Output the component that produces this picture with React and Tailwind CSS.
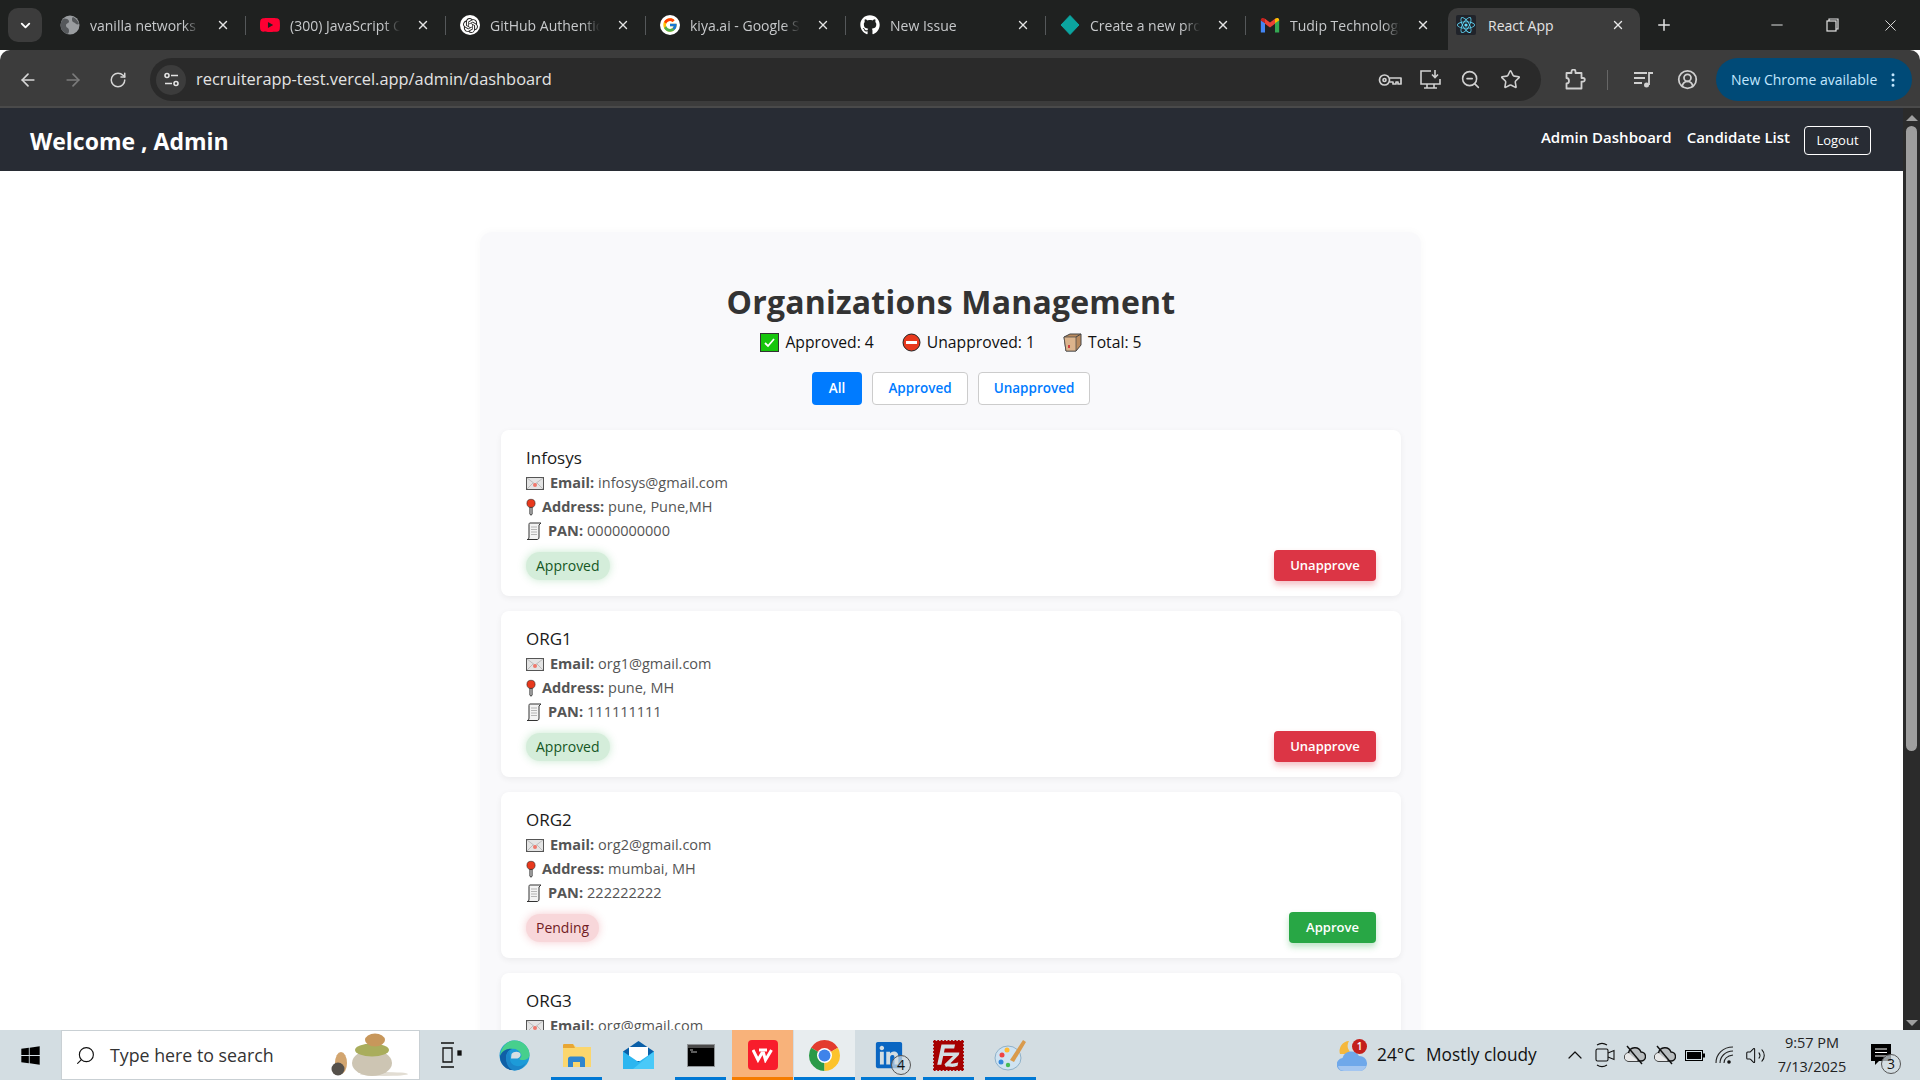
import React from "react";
import { ArrowLeft, ArrowRight, RotateCw, ZoomOut, Star, CircleUserRound, EllipsisVertical, Plus, Minus, X, ChevronDown, ChevronUp, Search, Volume2 } from "lucide-react";
import { FaGithub, FaLinkedin, FaWindows, FaReact } from "react-icons/fa";
import { FcGoogle } from "react-icons/fc";
import { SiOpenai, SiFilezilla, SiYoutube } from "react-icons/si";

const Gmail = () => (
  <svg width="20" height="20" viewBox="0 0 24 24">
    <path d="M1 21V6l5 3.500V21z" fill="#4285f4" />
    <path d="M23 21V6l-5 3.500V21z" fill="#34a853" />
    <path d="M6 4.500v6l6 4.500 6-4.500v-6l-6 4.500z" fill="#ea4335" />
    <path d="M1 6c0-2.500 3-3 5-1.500v5.500L1 6.500z" fill="#c5221f" />
    <path d="M23 6c0-2.500-3-3-5-1.500v5.500l5-3.500z" fill="#fbbc04" />
  </svg>
);
const Diamond = () => (
  <svg width="20" height="20" viewBox="0 0 20 20"><path d="M10 0.500l9 9.500-9 9.500-9-9.500z" fill="#0ca5a0" stroke="#0ca5a0" strokeLinejoin="round" /></svg>
);
const GlobeFav = () => (
  <svg width="20" height="20" viewBox="0 0 20 20">
    <circle cx="10" cy="10" r="9.500" fill="#9a9da0" />
    <path d="M4 3.500c3 0 5 1 5 3s-3 1.500-3 4 3 2 3 5-1 3-2 3.500C3 17.500.5 14 .5 10c0-2.500 1.500-5 3.500-6.500zM13 2c3 1.500 5 4 6 7-2 1-3 0-4-1s-3-1-3-3 0-2 1-3z" fill="#55585b" />
  </svg>
);

const tabs = [
  { t: "vanilla networks developer", i: <GlobeFav /> },
  { t: "(300) JavaScript Concepts", i: <SiYoutube size={20} className="text-[#ff0033]" /> },
  { t: "GitHub Authentication", i: <span className="w-5 h-5 rounded-full bg-white flex items-center justify-center"><SiOpenai size={15} className="text-[#222]" /></span> },
  { t: "kiya.ai - Google Search", i: <span className="w-5 h-5 rounded-full bg-white flex items-center justify-center"><FcGoogle size={16} /></span> },
  { t: "New Issue", i: <FaGithub size={20} className="text-white" /> },
  { t: "Create a new project", i: <Diamond /> },
  { t: "Tudip Technologies Mail", i: <Gmail /> },
];

function Tab({ t, i, last }) {
  return (
    <div className="relative w-[200px] h-[42px] flex items-center pl-[14px] pr-[16px] shrink-0">
      <span className="w-5 flex justify-center shrink-0">{i}</span>
      <span className="ml-[10px] w-[110px] overflow-hidden whitespace-nowrap text-[14px] text-[#c7c9cb] [mask-image:linear-gradient(to_right,black_85%,transparent)]">{t}</span>
      <X size={14} strokeWidth={2.4} className="ml-auto text-[#e3e3e3] shrink-0" />
      {!last && <span className="absolute right-0 top-[12px] h-[19px] w-px bg-[#55585a]" />}
    </div>
  );
}

const CheckEmoji = () => (
  <svg width="19" height="19" viewBox="0 0 19 19" className="shrink-0">
    <rect x="0.500" y="0.500" width="18" height="18" fill="#16c60c" stroke="#333" />
    <path d="M5 10l3 3 6-7" fill="none" stroke="#fff" strokeWidth="1.800" />
  </svg>
);
const NoEntry = () => (
  <svg width="19" height="19" viewBox="0 0 19 19" className="shrink-0 block">
    <circle cx="9.500" cy="9.500" r="8.500" fill="#e8391d" stroke="#222" />
    <rect x="4" y="8" width="11" height="3" fill="#fff" />
  </svg>
);
const Pack = () => (
  <svg width="19" height="19" viewBox="0 0 19 19" className="shrink-0 block">
    <path d="M1 4l6-3h11v11l-5 6H3z" fill="#b98a5e" stroke="#444" />
    <path d="M1 4l12 0 0 14H3z" fill="#dcb48c" stroke="#444" strokeWidth="0.700" />
    <path d="M13 4l5-3" stroke="#444" />
    <rect x="5" y="12" width="2" height="3" fill="#d04040" />
  </svg>
);
const Mail = () => (
  <svg width="18" height="13" viewBox="0 0 18 13" className="shrink-0">
    <rect x="0.500" y="0.500" width="17" height="12" fill="#e4e4e4" stroke="#555" />
    <path d="M1 1l8 6 8-6M1 12l6-6M17 12l-6-6" fill="none" stroke="#aaa" strokeWidth="0.700" />
    <circle cx="9" cy="8" r="2" fill="#f0786c" />
  </svg>
);
const Pin = () => (
  <svg width="10" height="18" viewBox="0 0 11 18" className="shrink-0">
    <path d="M4.300 9h2.400v8l-1.200 1-1.200-1z" fill="#ddd" stroke="#222" />
    <circle cx="5.500" cy="5" r="4.500" fill="#e8391d" stroke="#222" strokeWidth="0.600" />
  </svg>
);
const Scroll = () => (
  <svg width="16" height="18" viewBox="0 0 16 18" className="shrink-0">
    <path d="M4 1h11l-2 2v12c0 2-1 2.500-2 2.500H1c1 0 2-.5 2-2.500V3c0-1 0-2 1-2z" fill="#f3f3f3" stroke="#333" />
    <path d="M5 5h6M5 7.500h6M5 10h6M5 12.500h6" stroke="#999" strokeWidth="0.700" />
  </svg>
);

const orgs = [
  { n: "Infosys", e: "infosys@gmail.com", a: "pune, Pune,MH", p: "0000000000", ok: true },
  { n: "ORG1", e: "org1@gmail.com", a: "pune, MH", p: "111111111", ok: true },
  { n: "ORG2", e: "org2@gmail.com", a: "mumbai, MH", p: "222222222", ok: false },
  { n: "ORG3", e: "org@gmail.com", a: "pune, MH", p: "333333333", ok: true },
];

function Org({ o }) {
  return (
    <div className="bg-white rounded-lg pt-[16px] pb-[15px] px-[25px] shadow-[0_2px_6px_rgba(0,0,0,0.06)]">
      <div className="text-[17px] leading-[24px] font-medium text-[#1a1a1a]">{o.n}</div>
      <div className="text-[14.5px] leading-[24px] mt-[1px] text-[#555]">
        <div className="flex items-center"><Mail /><b className="font-bold ml-[6px] mr-[4px]">Email:</b>{o.e}</div>
        <div className="flex items-center"><Pin /><b className="font-bold ml-[6px] mr-[4px]">Address:</b>{o.a}</div>
        <div className="flex items-center"><Scroll /><b className="font-bold ml-[6px] mr-[4px]">PAN:</b>{o.p}</div>
      </div>
      <div className="flex items-center justify-between mt-[7px]">
        {o.ok ? (
          <span className="rounded-[14px] h-[28px] px-[10px] flex items-center text-[14px] font-medium bg-[#d4edda] text-[#155724] shadow-[0_0_8px_rgba(40,167,69,0.25)]">Approved</span>
        ) : (
          <span className="rounded-[14px] h-[28px] px-[10px] flex items-center text-[14px] font-medium bg-[#f8d7da] text-[#721c24] shadow-[0_0_8px_rgba(220,53,69,0.25)]">Pending</span>
        )}
        {o.ok ? (
          <button className="h-[31px] w-[102px] rounded-[4px] bg-[#dc3545] text-white text-[13px] font-semibold shadow-[0_4px_6px_rgba(220,53,69,0.3)]">Unapprove</button>
        ) : (
          <button className="h-[31px] w-[87px] rounded-[4px] bg-[#28a745] text-white text-[13px] font-semibold shadow-[0_4px_6px_rgba(40,167,69,0.3)]">Approve</button>
        )}
      </div>
    </div>
  );
}

const Ico = ({ w, children, className = "" }) => <span className={`flex justify-center items-center shrink-0 ${className}`} style={{ width: w }}>{children}</span>;

const SiteInfo = () => (
  <svg width="17" height="17" viewBox="0 0 17 17" fill="none" stroke="#e3e3e3" strokeWidth="1.600">
    <circle cx="4" cy="4.500" r="2" /><path d="M8 4.500h7M2 12.500h7" /><circle cx="13" cy="12.500" r="2" />
  </svg>
);
const KeyIcon = () => (
  <svg width="24" height="14" viewBox="0 0 24 14" fill="none" stroke="#d0d0d0" strokeWidth="1.700">
    <circle cx="6.500" cy="7" r="5" /><circle cx="6.500" cy="7" r="1.500" /><path d="M11.500 5h11.500v6h-3V9h-2v2h-3V9h-3.500" strokeLinejoin="round" />
  </svg>
);
const MonitorIcon = () => (
  <svg width="21" height="20" viewBox="0 0 21 20" fill="none" stroke="#d0d0d0" strokeWidth="1.600">
    <path d="M11 1H1v13h19V9M7 14v3.500M14 14v3.500M4 18h13" />
    <path d="M15 0v7M12 4.500l3 3 3-3" />
  </svg>
);
const PuzzleIcon = () => (
  <svg width="21" height="21" viewBox="0 0 21 21" fill="none" stroke="#d0d0d0" strokeWidth="1.800" strokeLinejoin="round">
    <path d="M1.500 4h5V2.500a2 2 0 0 1 4 0V4h6v5h1.500a1.800 1.800 0 0 1 0 3.600H16.500V19.500H1.500v-5c2 0 2.500-1.500 2.500-2.500S3.500 9 1.500 9z" />
  </svg>
);
const MusicIcon = () => (
  <svg width="20" height="18" viewBox="0 0 20 18" fill="none" stroke="#d0d0d0" strokeWidth="1.800">
    <path d="M0 2h13M0 7h11M0 12h8M15 14V2h4" /><circle cx="12.500" cy="14" r="2.500" fill="#d0d0d0" stroke="none" />
  </svg>
);

function ChromeIcon() {
  return (
    <svg width="31" height="31" viewBox="0 0 31 31">
      <path d="M15.500 15.500L2.080 7.750A15.500 15.500 0 0 1 28.920 7.750z" fill="#e33b2e" />
      <path d="M15.500 15.500L2.080 7.750A15.500 15.500 0 0 0 15.500 31z" fill="#2a9a47" />
      <path d="M15.500 15.500L28.920 7.750A15.500 15.500 0 0 1 15.500 31z" fill="#fcc32c" />
      <circle cx="15.500" cy="15.500" r="7.500" fill="#fff" />
      <circle cx="15.500" cy="15.500" r="6" fill="#3f83ea" />
    </svg>
  );
}
const EdgeIcon = () => (
  <svg width="31" height="31" viewBox="0 0 31 31">
    <circle cx="15.500" cy="15.500" r="15" fill="#1d9bd8" />
    <path d="M1 16C2 7 8 .5 15.500 .5 24 .5 30.500 7 30.500 15c0 3-3 5-7 5-1.500 0-3-.5-3.500-1 2-1 3-3 2-5-1.500-4-6-6-10-5C7 10 3 12 1 16z" fill="#47cf8d" />
    <path d="M1 16c2-5 7-8 12-7-4 1-6 5-6 9 0 5 4 9 10 11-1 .5-2 1-4 1C7 30 .5 24 1 16z" fill="#0f5fa6" />
    <path d="M11 18c-.5 5 4 9 10 8 3-.5 5-2 6-4-2 5-6 8.500-11.500 8.500C10 30 7 24 7 18c0-3 1.500-6 4-8 -1 3 0 5 0 8z" fill="#1b86c9" />
    <path d="M12.500 14c2-3 8-3 9 0 .5 2-1 4-3 4.500h-6.500z" fill="#d6e0e3" />
  </svg>
);
const FolderIcon = () => (
  <svg width="28" height="23" viewBox="0 0 28 23">
    <path d="M0 1.500C0 .5.500 0 1.500 0H10l3 3h15v20H0z" fill="#fbd66d" />
    <path d="M0 1.500C0 .5.500 0 1.500 0H10l2 4H0z" fill="#e8a634" />
    <path d="M5 23v-8c0-1.500 1-2.500 2.500-2.500H19c1.500 0 3 1 3 2.500v8h-5v-5h-7v5z" fill="#2f86cf" />
  </svg>
);
const MailIcon = () => (
  <svg width="31" height="28" viewBox="0 0 31 28">
    <path d="M15.500 0L0 10.500V28h31V10.500z" fill="#0a5fa8" />
    <path d="M6 6h19v14H6z" fill="#fff" />
    <path d="M0 10.500L15.500 21 31 10.500V28H0z" fill="#2db6f0" />
    <path d="M31 10.500V28H10z" fill="#49c9f8" />
  </svg>
);
const TermIcon = () => (
  <svg width="28" height="23" viewBox="0 0 28 23">
    <rect width="28" height="23" fill="#8f9396" />
    <rect x="1" y="1" width="26" height="21" fill="#000" />
    <rect x="1" y="1" width="26" height="3" fill="#4a4a4a" />
    <path d="M3 6h3M4 8h6" stroke="#ccc" strokeWidth="0.900" />
  </svg>
);
const WpsIcon = () => (
  <span className="w-[30px] h-[30px] rounded-[4px] bg-[#f81d2c] flex items-center justify-center">
    <svg width="22" height="15" viewBox="0 0 22 15" fill="none" stroke="#fff" strokeWidth="3"><path d="M1 2l5 10 4-7 1.500 0 2 7 6-10" /><path d="M7 2h8" /></svg>
  </span>
);
const PaintIcon = () => (
  <svg width="34" height="32" viewBox="0 0 34 32">
    <ellipse cx="14" cy="19" rx="13" ry="12" fill="#cfe3f2" stroke="#8fb1c9" />
    <circle cx="8" cy="16" r="2.500" fill="#e44" /><circle cx="13" cy="11" r="2.500" fill="#fb3" />
    <circle cx="7" cy="23" r="2.500" fill="#38d" /><circle cx="14" cy="26" r="2.200" fill="#4b5" />
    <path d="M16 21L29 1l3 2-12 20z" fill="#d99a4c" />
  </svg>
);
const Stones = () => (
  <svg width="80" height="46" viewBox="0 0 80 46" className="ml-auto mr-[10px]">
    <ellipse cx="55" cy="42" rx="24" ry="2" fill="#e2ddd3" />
    <ellipse cx="43" cy="31" rx="20" ry="13" fill="#cdc5b3" />
    <ellipse cx="43" cy="18" rx="17" ry="6.500" fill="#a9ad5c" />
    <ellipse cx="46" cy="8" rx="10" ry="6.500" fill="#c7975b" />
    <ellipse cx="12" cy="31" rx="6" ry="11" fill="#d2a56f" />
    <circle cx="9" cy="37" r="6.500" fill="#55504a" />
  </svg>
);
const CamIcon = () => (
  <svg width="20" height="27" viewBox="0 0 20 27" fill="none" stroke="#111" strokeWidth="1.100">
    <rect x="1" y="7" width="12" height="12" rx="1.500" /><path d="M13 11l6-2.500v9l-6-2.500" />
    <path d="M2 3c3-2 7-2 10 0M2 23c3 2 7 2 10 0" />
  </svg>
);
const CloudSlash = () => (
  <svg width="22" height="20" viewBox="0 0 22 20">
    <path d="M5 16a4 4 0 0 1-.5-8A6.500 6.500 0 0 1 17 7a4.500 4.500 0 0 1 0 9z" fill="#b9bdbf" stroke="#111" strokeWidth="1.400" />
    <path d="M5 16a4 4 0 0 1-.5-8L14 16z" fill="#e8e8e8" />
    <path d="M3 1l15 18" stroke="#111" strokeWidth="1.400" />
  </svg>
);
const Battery = () => (
  <svg width="20" height="11" viewBox="0 0 20 11"><rect x="0.500" y="0.500" width="17" height="10" fill="#d3dde2" stroke="#000" /><rect x="2" y="2" width="14" height="7" fill="#000" /><rect x="18" y="3.500" width="2" height="4" fill="#000" /></svg>
);
const WifiIcon = () => (
  <svg width="20" height="18" viewBox="0 0 20 18" fill="none" stroke="#222" strokeWidth="1.100">
    <path d="M1 17C1 8 8 1 18 1M5 17C5 11 10 5 18 5M9 17c0-4 3-7 9-8" /><circle cx="14" cy="16" r="1.800" fill="#111" stroke="none" />
  </svg>
);
const RestoreIcon = () => (
  <svg width="13" height="14" viewBox="0 0 13 14" fill="none" stroke="#e3e3e3" strokeWidth="1.200"><rect x="1" y="3" width="9" height="10" /><path d="M3 3V1h9v10h-2" /></svg>
);
const Weather = () => (
  <svg width="30" height="31" viewBox="0 0 30 31">
    <path d="M12 1a9 9 0 0 0 4 13H3a10 10 0 0 1 9-13z" fill="#f5b83d" />
    <path d="M7 31a6.500 6.500 0 0 1-1.500-13A9 9 0 0 1 22 16a7.500 7.500 0 0 1 1 15z" fill="#6fa8ea" />
    <path d="M7 31a6.500 6.500 0 0 1-6-5h28a7 7 0 0 1-6 5z" fill="#a4c6f0" />
  </svg>
);
const NotifyIcon = () => (
  <svg width="20" height="22" viewBox="0 0 20 22"><path d="M0 0h20v17H8l-4 4v-4H0z" fill="#000" /><path d="M4 5h12M4 8.500h12M4 12h12" stroke="#fff" strokeWidth="1" /></svg>
);

function Task({ children, on, badge, cls }) {
  return (
    <div className={`relative flex items-center justify-center shrink-0 pt-[3px] border-b-[3px] ${cls} ${on ? "border-[#0078d4]" : "border-transparent"}`}>
      {children}
      {badge && <span className="absolute right-[5px] bottom-[2px] w-[20px] h-[20px] rounded-full border border-[#555] bg-[#d3dde2]/70 text-[14px] leading-[18px] text-center">{badge}</span>}
    </div>
  );
}

export default function App() {
  return (
    <div className="w-[1920px] h-[1080px] flex flex-col overflow-hidden bg-white font-['Open_Sans','Segoe_UI',sans-serif]">
      {/* tab strip */}
      <div className="h-[50px] bg-[#1f2120] flex items-end shrink-0">
        <div className="w-[46px] flex justify-end pr-[4px] self-center shrink-0">
          <span className="w-[34px] h-[34px] rounded-[10px] bg-[#3c3c3c] flex items-center justify-center"><ChevronDown size={15} strokeWidth={3} className="text-white" /></span>
        </div>
        {tabs.map((x, i) => <div key={x.t} className="self-center"><Tab t={x.t} i={x.i} last={i === 6} /></div>)}
        <div className="w-[192px] ml-[2px] h-[42px] bg-[#3c3c3c] rounded-t-[10px] flex items-center pl-[8px] pr-[15px] pb-[8px] shrink-0">
          <span className="w-5 h-5 bg-[#20232a] flex items-center justify-center rounded-[2px]"><FaReact size={18} className="text-[#61dafb]" /></span>
          <span className="ml-[12px] text-[14px] text-[#e3e3e3]">React App</span>
          <X size={14} strokeWidth={2.4} className="ml-auto text-[#e8e8e8]" />
        </div>
        <div className="flex-1 flex items-center self-center text-[#e3e3e3]">
          <Plus size={18} strokeWidth={2} className="ml-[15px]" />
          <Minus size={18} strokeWidth={1.300} className="ml-[95px]" />
          <span className="ml-[40px]"><RestoreIcon /></span>
          <X size={19} strokeWidth={1.200} className="ml-[42px]" />
        </div>
      </div>
      {/* toolbar */}
      <div className="h-[58px] pt-[3px] bg-[#3c3c3c] flex items-center shrink-0 rounded-t-[10px] border-b-[2px] border-[#4a4a4a]">
        <Ico w={28} className="ml-[14px] text-[#d6d6d6]"><ArrowLeft size={20} /></Ico>
        <Ico w={28} className="ml-[17px] text-[#7b7b7b]"><ArrowRight size={20} /></Ico>
        <Ico w={28} className="ml-[17px] text-[#d6d6d6]"><RotateCw size={18} /></Ico>
        <div className="ml-[18px] flex items-center w-[1391px] h-[43px] rounded-full bg-[#2a2a2a] pl-[6px] pr-[20px]">
          <span className="w-[30px] h-[30px] rounded-full bg-[#3c3c3c] flex items-center justify-center"><SiteInfo /></span>
          <span className="ml-[10px] text-[16.400px] text-[#e3e3e3]">recruiterapp-test.vercel.app/admin/dashboard</span>
          <div className="ml-auto flex items-center text-[#d0d0d0]">
            <KeyIcon />
            <span className="ml-[18px]"><MonitorIcon /></span>
            <ZoomOut size={21} strokeWidth={1.800} className="ml-[19px]" />
            <Star size={21} strokeWidth={1.800} className="ml-[19px]" />
          </div>
        </div>
        <span className="ml-[24px]"><PuzzleIcon /></span>
        <span className="ml-[21px] w-px h-[20px] bg-[#666]" />
        <span className="ml-[26px]"><MusicIcon /></span>
        <CircleUserRound size={21} className="ml-[23px] text-[#d0d0d0]" />
        <div className="ml-[18px] w-[196px] h-[43px] rounded-full bg-[#004a77] flex items-center pl-[15px] text-[14px] text-[#c2e7ff]">
          New Chrome available
          <EllipsisVertical size={18} className="ml-auto mr-[10px]" />
        </div>
      </div>
      {/* page */}
      <div className="flex-1 min-h-0 flex">
        <div className="flex-1 min-w-0 flex flex-col overflow-hidden">
          <header className="h-[63px] shrink-0 bg-[#282c34] flex items-center pl-[30px] pr-[32px] pt-[2px] text-white">
            <span className="text-[23px] font-bold mt-[2px]">Welcome , Admin</span>
            <span className="ml-auto text-[15px] font-semibold -mt-[6px]">Admin Dashboard</span>
            <span className="ml-[15px] text-[15px] font-semibold -mt-[6px]">Candidate List</span>
            <button className="ml-[14px] w-[67px] h-[29px] border border-white rounded-[4px] text-[13px]">Logout</button>
          </header>
          <div className="flex-1 min-h-0 overflow-hidden pt-[61px]">
            <div className="w-[941px] ml-[480px] rounded-xl bg-[#f9f9fb] pl-[21px] pr-[20px] pt-[48px] shadow-[0_0_10px_rgba(0,0,0,0.03)]">
              <h1 className="text-center text-[32px] leading-[44px] font-bold text-[#333] tracking-[0.2px]">Organizations Management</h1>
              <div className="flex items-center justify-center mt-[6px] text-[15.700px] leading-[24px] font-medium text-[#111]">
                <CheckEmoji /><span className="ml-[6px]">Approved: 4</span>
                <span className="ml-[28px]"><NoEntry /></span><span className="ml-[6px]">Unapproved: 1</span>
                <span className="ml-[28px]"><Pack /></span><span className="ml-[6px]">Total: 5</span>
              </div>
              <div className="flex justify-center gap-[10px] mt-[18px] text-[13.500px] font-semibold">
                <button className="w-[50px] h-[33px] rounded-[4px] bg-[#007bff] text-white">All</button>
                <button className="w-[96px] h-[33px] rounded-[4px] bg-white border border-[#ccc] text-[#007bff]">Approved</button>
                <button className="w-[112px] h-[33px] rounded-[4px] bg-white border border-[#ccc] text-[#007bff]">Unapproved</button>
              </div>
              <div className="flex flex-col gap-[15px] mt-[25px]">
                {orgs.map((o) => <Org key={o.n} o={o} />)}
              </div>
            </div>
          </div>
        </div>
        <div className="w-[17px] shrink-0 bg-[#2b2b2b] flex flex-col items-center">
          <span className="mt-[7px] w-0 h-0 border-x-[6px] border-x-transparent border-b-[6px] border-b-[#9e9e9e]" />
          <span className="mt-[5px] w-[11px] h-[625px] rounded-full bg-[#9e9e9e]" />
          <span className="mt-auto mb-[4px] w-0 h-0 border-x-[6px] border-x-transparent border-t-[6px] border-t-[#9e9e9e]" />
        </div>
      </div>
      {/* taskbar */}
      <div className="h-[50px] shrink-0 bg-[#d3dde2] flex items-stretch text-[#111]">
        <Ico w={61}><FaWindows size={21} className="text-black" /></Ico>
        <div className="w-[359px] shrink-0 bg-white flex items-center pl-[13px] border border-[#c9d0d4]">
          <Search size={21} strokeWidth={1.300} className="-scale-x-100" />
          <span className="ml-[14px] text-[17.800px] text-[#333]">Type here to search</span>
          <Stones />
        </div>
        <Ico w={61}><svg width="22" height="26" viewBox="0 0 22 26" fill="none" stroke="#111" strokeWidth="1.300"><path d="M1 1h13M1 25h13M3 6h9v14H3z" /><rect x="18" y="9" width="3" height="4" fill="#111" /></svg></Ico>
        <Task cls="w-[51px] ml-[8px]"><EdgeIcon /></Task>
        <Task on cls="w-[51px] ml-[11px]"><FolderIcon /></Task>
        <Task cls="w-[51px] ml-[11px]"><MailIcon /></Task>
        <Task on cls="w-[51px] ml-[11px]"><TermIcon /></Task>
        <div className="w-[61px] shrink-0 bg-[#f8b27a] border-b-[3px] border-[#f57c00] flex items-center justify-center ml-[6px] pt-[3px]"><WpsIcon /></div>
        <div className="w-[61px] ml-[1px] shrink-0 bg-[#e8edef] border-b-[3px] border-[#0078d4] flex items-center justify-center pt-[3px]"><ChromeIcon /></div>
        <Task on badge="4" cls="w-[55px] ml-[6px]"><FaLinkedin size={30} className="text-[#0a66c2]" /></Task>
        <Task on cls="w-[51px] ml-[7px]"><SiFilezilla size={31} className="text-[#a60000]" /></Task>
        <Task on cls="w-[51px] ml-[11px]"><PaintIcon /></Task>
        <div className="flex-1" />
        <div className="relative w-[32px] flex items-center shrink-0">
          <Weather />
          <span className="absolute top-[9px] left-[15px] w-[15px] h-[15px] rounded-full bg-[#c4201c] text-white text-[10px] leading-[15px] text-center font-semibold">1</span>
        </div>
        <div className="flex items-center text-[17.300px] shrink-0 ml-[8px] w-[183px]">
          <span>24°C</span><span className="ml-[11px]">Mostly cloudy</span>
        </div>
        <div className="flex items-center text-[#111] shrink-0">
          <Ico w={30}><ChevronUp size={24} strokeWidth={1.200} /></Ico>
          <Ico w={30}><CamIcon /></Ico>
          <Ico w={30}><CloudSlash /></Ico>
          <Ico w={30}><CloudSlash /></Ico>
          <Ico w={30}><Battery /></Ico>
          <Ico w={30}><WifiIcon /></Ico>
          <Ico w={30}><Volume2 size={21} strokeWidth={1.200} /></Ico>
        </div>
        <div className="w-[76px] ml-[4px] flex flex-col justify-center items-center text-[14.500px] leading-[24px] text-[#222] shrink-0">
          <span>9:57 PM</span><span>7/13/2025</span>
        </div>
        <div className="relative w-[56px] ml-[3px] mr-[11px] flex items-center justify-center shrink-0">
          <NotifyIcon />
          <span className="absolute right-[8px] bottom-[6px] w-[20px] h-[20px] rounded-full border border-[#555] bg-[#d3dde2]/70 text-[14px] leading-[18px] text-center">3</span>
        </div>
      </div>
    </div>
  );
}
